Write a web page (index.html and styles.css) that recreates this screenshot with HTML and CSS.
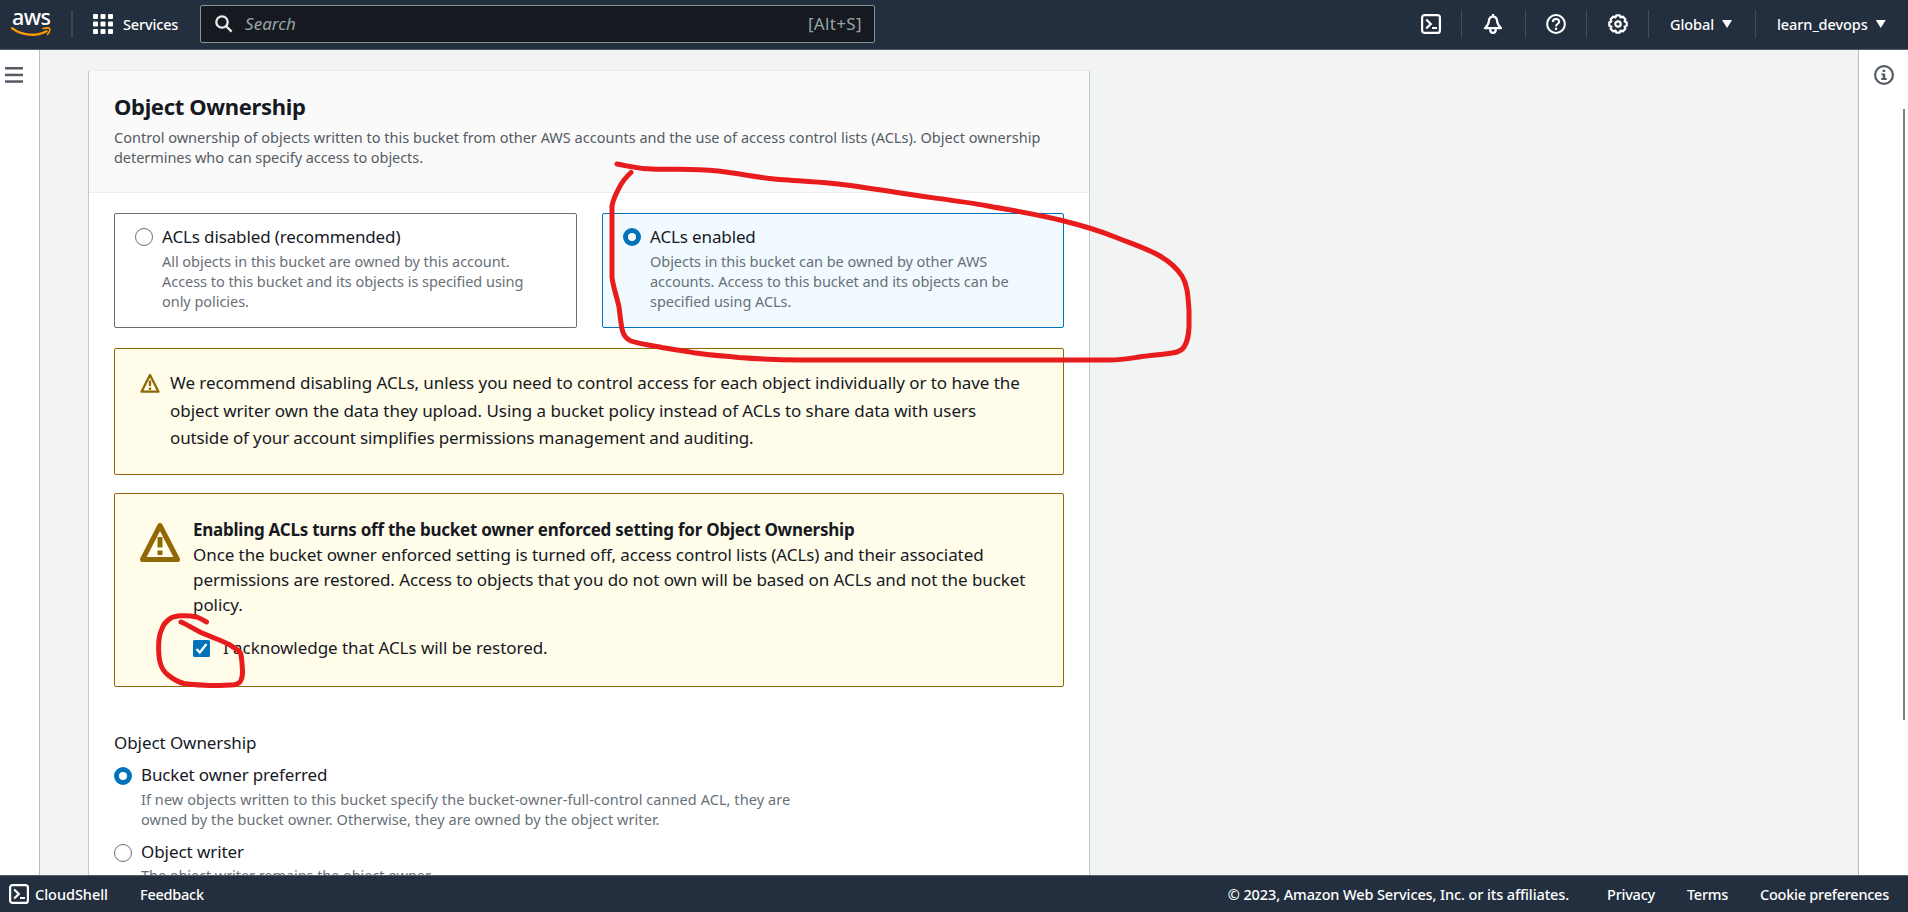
FILE: index.html
```
<!DOCTYPE html>
<html lang="en">
<head>
<meta charset="utf-8">
<title>Create bucket - Object Ownership</title>
<link rel="stylesheet" href="styles.css">
</head>
<body>
<header class="topbar">
  <div class="logo">
    <span class="logo-word">aws</span>
    <svg class="logo-smile" width="40" height="11" viewBox="0 0 40 11"><path d="M1 1.2C11 9 26 9.600 35.500 4.200" fill="none" stroke="#ff9900" stroke-width="2.300" stroke-linecap="round"/><path d="M32 1.600C35 .8 37.500 .6 38.600 1.300C39.300 2.600 38 5.500 36.500 7.500" fill="none" stroke="#ff9900" stroke-width="1.600" stroke-linecap="round"/></svg>
  </div>
  <span class="sep sep-logo"></span>
  <div class="services">
    <svg width="20" height="20" viewBox="0 0 20 20" fill="#fff"><rect width="5" height="5" rx="1"/><rect x="7.500" width="5" height="5" rx="1"/><rect x="15" width="5" height="5" rx="1"/><rect y="7.500" width="5" height="5" rx="1"/><rect x="7.500" y="7.500" width="5" height="5" rx="1"/><rect x="15" y="7.500" width="5" height="5" rx="1"/><rect y="15" width="5" height="5" rx="1"/><rect x="7.500" y="15" width="5" height="5" rx="1"/><rect x="15" y="15" width="5" height="5" rx="1"/></svg>
    <span>Services</span>
  </div>
  <div class="search">
    <svg width="18" height="18" viewBox="0 0 18 18" fill="none" stroke="#eaeded" stroke-width="2.300"><circle cx="7" cy="7" r="5.700"/><path d="M11.200 11.200L16.600 16.600"/></svg>
    <span class="search-hint">Search</span>
    <span class="search-key">[Alt+S]</span>
  </div>
  <div class="tools">
    <span class="tool tool-shell"><svg width="20" height="20" viewBox="0 0 20 20" fill="none" stroke="#fff" stroke-width="2.200"><rect x="1.100" y="1.100" width="17.800" height="17.800" rx="2.500"/><path d="M5.200 5.500L9.800 10L5.200 14.500M11 14H16"/></svg></span>
    <span class="tool tool-bell"><svg width="20" height="20" viewBox="0 0 20 20" fill="none" stroke="#fff" stroke-width="2.200" stroke-linejoin="round"><path d="M10 0V3M2 14.200H18C15.800 12 14.300 10.500 14.200 7.500C14 4.500 12.500 2.600 10 2.600S6 4.500 5.800 7.500C5.700 10.500 4.200 12 2 14.200Z"/><path d="M7.300 14.500V16C7.300 17.800 8.300 18.900 10 18.900S12.700 17.800 12.700 16V14.500"/></svg></span>
    <span class="tool tool-help"><svg width="20" height="20" viewBox="0 0 20 20" fill="none" stroke="#fff" stroke-width="2"><circle cx="10" cy="10" r="8.900"/><path d="M6.900 8C6.900 6 8.200 4.900 10 4.900S13.200 6 13.200 7.700C13.200 9.800 10 9.800 10 12.500"/><path d="M10 13.700V15.900" stroke-width="2.200"/></svg></span>
    <span class="tool tool-gear"><svg width="20" height="20" viewBox="0 0 20 20" fill="none" stroke="#fff" stroke-width="2.200" stroke-linejoin="round"><path d="M8.300 1.300H11.700L12.500 3.400L14.800 2.600L17.400 5.200L16.600 7.500L18.700 8.300V11.700L16.600 12.500L17.400 14.800L14.800 17.400L12.500 16.600L11.700 18.700H8.300L7.500 16.600L5.200 17.400L2.600 14.800L3.400 12.500L1.300 11.700V8.300L3.400 7.500L2.600 5.200L5.200 2.600L7.500 3.400Z"/><circle cx="10" cy="10" r="2.700"/></svg></span>
    <span class="tool tool-region"><span>Global</span><i class="caret"></i></span>
    <span class="tool tool-user"><span>learn_devops</span><i class="caret"></i></span>
  </div>
</header>

<main class="main">
  <nav class="rail rail-left">
    <svg width="18" height="16" viewBox="0 0 18 16" fill="#545b64"><rect width="18" height="2.500"/><rect y="6.700" width="18" height="2.500"/><rect y="13.300" width="18" height="2.500"/></svg>
  </nav>
  <div class="content">
    <section class="card">
      <div class="card-head">
        <h2>Object Ownership</h2>
        <p class="head-desc">Control ownership of objects written to this bucket from other AWS accounts and the use of access control lists (ACLs). Object ownership<br><span class="head-last">determines who can specify access to objects.</span></p>
      </div>
      <div class="card-body">
        <div class="tiles">
          <div class="tile">
            <i class="radio"></i>
            <div>
              <p class="label label-tile">ACLs disabled (recommended)</p>
              <p class="desc">All objects in this bucket are owned by this account.<br>Access to this bucket and its objects is specified using<br>only policies.</p>
            </div>
          </div>
          <div class="tile tile-on">
            <i class="radio radio-on"></i>
            <div>
              <p class="label label-tile">ACLs enabled</p>
              <p class="desc">Objects in this bucket can be owned by other AWS<br>accounts. Access to this bucket and its objects can be<br>specified using ACLs.</p>
            </div>
          </div>
        </div>

        <div class="alert alert-info">
          <svg width="20" height="20" viewBox="0 0 20 20"><path d="M10 2L18.500 18.700H1.500Z" fill="none" stroke="#906806" stroke-width="2.300" stroke-linejoin="round"/><path d="M10 7.500V13M10 14.500V17" stroke="#906806" stroke-width="2.300"/></svg>
          <p>We recommend disabling ACLs, unless you need to control access for each object individually or to have the<br><span class="loose">object writer own the data they upload. Using a bucket policy instead of ACLs to share data with users</span><br><span class="tight">outside of your account simplifies permissions management and auditing.</span></p>
        </div>

        <div class="alert alert-ack">
          <svg width="40" height="40" viewBox="0 0 40 40"><path d="M20 3.500L37.500 37.500H2.500Z" fill="none" stroke="#906806" stroke-width="5" stroke-linejoin="round"/><path d="M20 15V25.500M20 28.500V33" stroke="#906806" stroke-width="5"/></svg>
          <div>
            <p><b>Enabling ACLs turns off the bucket owner enforced setting for Object Ownership</b><br>Once the bucket owner enforced setting is turned off, access control lists (ACLs) and their associated<br>permissions are restored. Access to objects that you do not own will be based on ACLs and not the bucket<br>policy.</p>
            <div class="check-row">
              <svg width="17" height="17" viewBox="0 0 17 17"><rect width="17" height="17" rx="1.500" fill="#0073bb"/><path d="M3.500 9L6.800 12.500L13.500 4" fill="none" stroke="#fff" stroke-width="2.300"/></svg>
              <span>I acknowledge that ACLs will be restored.</span>
            </div>
          </div>
        </div>

        <p class="label field">Object Ownership</p>
        <div class="option">
          <i class="radio radio-on"></i>
          <div>
            <p class="label label-option">Bucket owner preferred</p>
            <p class="desc desc-wide">If new objects written to this bucket specify the bucket-owner-full-control canned ACL, they are<br>owned by the bucket owner. Otherwise, they are owned by the object writer.</p>
          </div>
        </div>
        <div class="option option-next">
          <i class="radio"></i>
          <div>
            <p class="label">Object writer</p>
            <p class="desc desc-writer">The object writer remains the object owner.</p>
          </div>
        </div>
      </div>
    </section>
  </div>
  <aside class="rail rail-right">
    <svg width="20" height="20" viewBox="0 0 20 20"><circle cx="10" cy="10" r="8.900" fill="none" stroke="#545b64" stroke-width="2.200"/><path d="M8.600 4.800H11.200V7H8.600ZM7.400 8.400H11.200V13H12.700V15H7.200V13H8.700V10.200H7.400Z" fill="#545b64"/></svg>
    <i class="thumb"></i>
  </aside>
</main>

<footer class="footer">
  <svg width="20" height="20" viewBox="0 0 20 20" fill="none" stroke="#fff" stroke-width="2.200"><rect x="1.100" y="1.100" width="17.800" height="17.800" rx="2.500"/><path d="M5.200 5.500L9.800 10L5.200 14.500M11 14H16"/></svg>
  <span class="shell">CloudShell</span>
  <span class="feedback">Feedback</span>
  <span class="copyright">© 2023, Amazon Web Services, Inc. or its affiliates.</span>
  <span class="privacy">Privacy</span>
  <span class="terms">Terms</span>
  <span class="cookies">Cookie preferences</span>
</footer>

<svg class="marks" width="1908" height="912" viewBox="0 0 1908 912" fill="none" stroke="#e81c1c" stroke-width="5" stroke-linecap="round" stroke-linejoin="round">
  <path d="M617 164C631 166.500 637 169 656 169.200C676 169.500 690 168 718 171C743 174 760 178 780 179.500C800 181 813 181.500 833 183.500C853 185.500 875 189 894 192C925 197.500 957 200 988 206C1013 210.500 1036 214 1062 220.500C1080 225 1098 230 1115 237C1131 243.500 1148 249 1160 256C1170 262 1177 268 1182 276C1188 286 1188 298 1189 310V327C1188.500 335 1188 341 1184 347C1181 351.500 1176 352.500 1172 353C1161 354.500 1150 355.500 1139 357C1129 358.500 1120 360 1110 360H800C779 360 759 359 739 357.500C724 356 708 355 694 352.700C683 350.500 672 349.500 662 347.500C651 345 641 344.500 631 341C626 339 623 334 622 329C620.500 321 620 314 619 307C617 297 613 287 612 277V206C613 199 616 194 619 188C622 182 626 177 631 172.500"/>
  <path d="M206.500 622C203 620 200 618 197 617C192 616 188 615.500 183 615.700C178 616 174 616 171 618C166 621 163 625 161.500 630C159.500 634 159 639 158.700 643C158.500 650 158.500 656 160 662C161.500 668 164 672 168 675C173 679 178 682 184 683.500C193 685 202 685 212 685.500C220 685.500 227 685.500 234 684.700C238 684 240.500 682 241 680C242.500 677 242.700 673 242.500 670C242 664 242 658 240.500 653C238 649 234 648 230 645C221 640 211 637 201 632.500C194 629 188 625 181 622"/>
</svg>
</body>
</html>
```
FILE: styles.css
```
* { box-sizing: border-box; }
body {
  margin: 0;
  width: 1908px;
  height: 912px;
  overflow: hidden;
  position: relative;
  display: flex;
  flex-direction: column;
  font-family: "Noto Sans", sans-serif;
  font-size: 17px;
  line-height: 25px;
  letter-spacing: -0.075px;
  color: #16191f;
  background: #f2f3f3;
}
p, h2 { margin: 0; }
svg, i { display: block; flex: none; }
span, p, h2 { white-space: nowrap; }

/* Top navigation */
.topbar {
  flex: none;
  height: 50px;
  display: flex;
  background: #232f3e;
  border-bottom: 1px solid #545b64;
  color: #fff;
  font-size: 14.5px;
  font-weight: 500;
}
.logo { width: 60px; padding: 5px 0 0 11px; }
.logo-word {
  display: block;
  height: 22px;
  padding-left: 1px;
  font: 500 21.5px/24px "Noto Sans", sans-serif;
  letter-spacing: -0.6px;
}
.sep { width: 2px; height: 28px; margin-top: 10px; background: #414750; border-radius: 1px; }
.sep-logo { margin-left: 11px; }
.services { display: flex; gap: 10px; padding: 14px 0 0 20px; width: 127px; letter-spacing: -0.16px; }
.services span { line-height: 21px; }
.search {
  width: 675px;
  height: 38px;
  margin-top: 5px;
  display: flex;
  align-items: center;
  padding: 0 12px 1px 14px;
  background: #16191f;
  border: 1px solid #879596;
  border-radius: 2px;
  font-size: 17px;
  font-weight: 400;
  color: #95a5a6;
}
.search-hint { margin-left: 12px; font-style: italic; letter-spacing: 0.05px; }
.search-key { margin-left: auto; letter-spacing: 0.35px; }
.tools { margin-left: auto; display: flex; padding-top: 10px; }
.tool { height: 28px; display: flex; align-items: center; padding-left: 21px; border-left: 1px solid #414d5c; }
.tool-shell { border-left: 0; width: 40px; padding-left: 0; }
.tool-bell { width: 64px; }
.tool-help { width: 61px; padding-left: 20px; }
.tool-gear { width: 62px; }
.tool-region { width: 107px; }
.tool-user { width: 153px; }
.tool svg { margin-top: -1px; }
.caret {
  width: 10px;
  height: 8px;
  margin-left: 8px;
  background: #fff;
  clip-path: polygon(0 0, 100% 0, 50% 100%);
}

/* Page frame */
.main { flex: 1; min-height: 0; display: flex; overflow: hidden; }
.rail { flex: none; background: #fff; }
.rail-left { width: 40px; padding: 17px 0 0 5px; border-right: 1px solid #b6bec0; }
.rail-right { position: relative; width: 50px; padding: 15px 0 0 15px; border-left: 1px solid #b6bec0; }
.thumb { position: absolute; right: 3px; top: 59px; width: 2px; height: 611px; background: #808080; }
.content { flex: 1; padding: 20px 0 0 49px; overflow: hidden; }

.card {
  width: 1000px;
  height: 1000px;
  background: #fff;
  box-shadow: -1px 1px 0 #c3caca, 1px 1px 0 #c3caca;
  border-top: 1px solid #eaeded;
}
.card-head { height: 122px; padding: 22px 25px 0; background: #fafafa; border-bottom: 1px solid #eaeded; }
h2 { font-size: 22px; line-height: 27px; font-weight: 700; letter-spacing: -0.34px; }
.head-desc { margin-top: 7px; font-size: 14.5px; line-height: 20px; letter-spacing: 0.012px; color: #545b64; }
.head-last { letter-spacing: -0.057px; }
.card-body { padding: 20px 25px 0; }

.tiles { display: grid; grid-template-columns: 463px 462px; gap: 25px; }
.tile {
  height: 115px;
  display: flex;
  gap: 9px;
  padding: 10px 0 0 20px;
  border: 1px solid #687078;
  border-radius: 2px;
}
.tile-on { background: #f1faff; border-color: #0073bb; }
.radio {
  width: 18px;
  height: 18px;
  margin-top: 4px;
  border: 1.500px solid #687078;
  border-radius: 50%;
  background: #fff;
}
.radio-on { border: 5.500px solid #0073bb; }
.label-tile { letter-spacing: -0.13px; }
.desc { margin-top: 2px; font-size: 14.5px; line-height: 20px; letter-spacing: -0.04px; color: #687078; }

/* Alerts */
.alert { display: flex; background: #fffce9; border: 1px solid #906806; border-radius: 2px; }
.alert-info { height: 127px; margin-top: 20px; padding: 20px 0 0 25px; gap: 10px; }
.alert-info p { line-height: 27.5px; letter-spacing: -0.07px; }
.alert-info svg { margin-top: 4px; }
.alert-info .loose { letter-spacing: -0.037px; }
.alert-info .tight { letter-spacing: -0.125px; }
.alert-ack { height: 194px; margin-top: 18px; padding: 23px 0 0 25px; gap: 13px; }
.alert-ack svg { margin-top: 5px; }
.alert-ack b { letter-spacing: -0.25px; }
.check-row { display: flex; gap: 13px; margin-top: 18px; }
.check-row span { letter-spacing: -0.05px; }

/* Ownership options */
.field { margin-top: 43px; }
.option { display: flex; gap: 9px; margin-top: 7px; }
.option .radio { margin-top: 5px; }
.option-next { margin-top: 10px; }
.label-option { letter-spacing: -0.155px; }
.option .desc { margin-top: 2px; }
.option .desc-wide { letter-spacing: 0.066px; }
.option .desc-writer { margin-top: 1px; letter-spacing: -0.065px; }

/* Footer */
.footer {
  flex: none;
  height: 37px;
  display: flex;
  align-items: center;
  padding: 0 19px 0 9px;
  background: #232f3e;
  border-top: 1px solid #545b64;
  color: #fff;
  font-size: 14.5px;
  font-weight: 500;
  letter-spacing: -0.25px;
}
.shell { margin-left: 6px; letter-spacing: -0.03px; }
.feedback { margin-left: 32px; }
.copyright { margin-left: auto; letter-spacing: -0.115px; }
.privacy { margin-left: 38px; }
.terms { margin-left: 32px; }
.cookies { margin-left: 32px; }

/* Freehand annotations over the page */
.marks { position: absolute; left: 0; top: 0; pointer-events: none; }
```
